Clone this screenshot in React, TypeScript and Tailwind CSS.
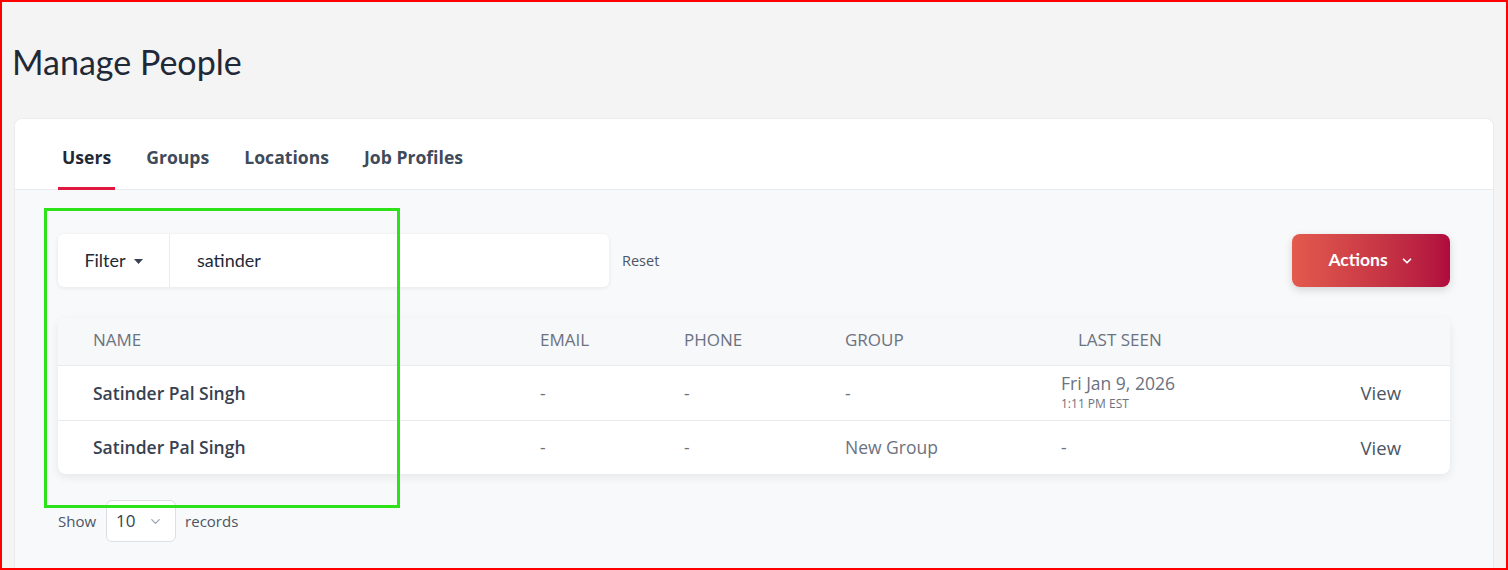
import { ChevronDown } from 'lucide-react';

const TABS = ['Users', 'Groups', 'Locations', 'Job Profiles'];

const USERS = [
  { name: 'Satinder Pal Singh', email: '-', phone: '-', group: '-', seen: 'Fri Jan 9, 2026', seenTime: '1:11 PM EST' },
  { name: 'Satinder Pal Singh', email: '-', phone: '-', group: 'New Group', seen: '-', seenTime: '' },
];

const COLS = 'grid grid-cols-[447px_144px_161px_216px_1fr_140px]';

function Tabs({ active }: { active: string }) {
  return (
    <div className="h-[71px] flex items-stretch gap-[27px] pl-[43px] border-b border-[#e8eaed] bg-white rounded-t-lg font-['Open_Sans',sans-serif]">
      {TABS.map(t => {
        const on = t === active;
        return (
          <div
            key={t}
            className={[
              'pt-[9px] px-1 flex items-center border-b-[3px] -mb-px text-[17.6px] font-bold',
              on ? 'border-[#e0173f] text-[#1f2937]' : 'border-transparent text-[#3f4a5a]',
            ].join(' ')}
          >
            {t}
          </div>
        );
      })}
    </div>
  );
}

function Toolbar() {
  return (
    <div className="flex items-center">
      <div className="w-[551px] h-[53px] flex bg-white rounded-md shadow-[0_1px_4px_rgba(0,0,0,0.08)]">
        <button className="w-[112px] flex items-center justify-center gap-2 border-r border-[#ececec] text-[18px] text-[#1f2937]">
          Filter
          <svg width="9" height="5" viewBox="0 0 9 5" className="mt-px">
            <path d="M0 0h9L4.5 5z" fill="#374151" />
          </svg>
        </button>
        <div className="flex-1 flex items-center pl-[27px] text-[18px] text-[#1f2937]">satinder</div>
      </div>
      <span className="ml-[13px] text-[14.5px] text-[#4b5563] font-['Open_Sans',sans-serif]">Reset</span>
      <button className="ml-auto w-[158px] h-[53px] flex items-center justify-center gap-3 rounded-lg bg-gradient-to-r from-[#e35a4d] to-[#b00a3e] text-white text-[17.5px] font-bold shadow-[0_3px_8px_rgba(0,0,0,0.15)]">
        Actions
        <ChevronDown size={14} strokeWidth={3} />
      </button>
    </div>
  );
}

function UserTable() {
  return (
    <div className="mt-[31px] bg-white rounded-lg shadow-[0_3px_10px_rgba(0,0,0,0.08)] overflow-hidden font-['Open_Sans',sans-serif]">
      <div className={`${COLS} h-12 items-center bg-[#f7f8f9] border-b border-[#e8eaed] text-[17px] text-[#6b7280] uppercase pb-[4px]`}>
        <div className="pl-[35px]">Name</div>
        <div className="pl-[35px]">Email</div>
        <div className="pl-[35px]">Phone</div>
        <div className="pl-[35px]">Group</div>
        <div className="pl-[52px]">Last Seen</div>
        <div />
      </div>
      {USERS.map((u, i) => (
        <div
          key={i}
          className={`${COLS} h-[54px] items-center text-[17.5px] text-[#6b7280] ${i > 0 ? 'border-t border-[#e8eaed]' : ''}`}
        >
          <div className="pl-[35px] font-semibold text-[#374151]">{u.name}</div>
          <div className="pl-[35px]">{u.email}</div>
          <div className="pl-[35px]">{u.phone}</div>
          <div className="pl-[35px]">{u.group}</div>
          {u.seenTime ? (
            <div className="pl-[35px] leading-tight">
              <div className="-mt-[2px]">{u.seen}</div>
              <div className="text-[12px] mt-px">{u.seenTime}</div>
            </div>
          ) : (
            <div className="pl-[35px]">{u.seen}</div>
          )}
          <div className="pr-[49px] text-right text-[18.5px] font-medium text-[#4b5563]">View</div>
        </div>
      ))}
    </div>
  );
}

export default function App() {
  return (
    <div className="relative w-[1508px] h-[570px] overflow-hidden border-2 border-[#ff0000] bg-[#f4f4f4] px-3 font-['Lato',sans-serif]">
      <h1 className="-ml-[2px] pt-[40px] h-[80px] text-[34px] leading-[40px] text-[#1f2937]">Manage People</h1>

      <div className="mt-[36px] bg-white rounded-lg border border-[#ebebeb]">
        <Tabs active="Users" />
        <div className="bg-[#f8f9fb] px-[43px] pt-[44px] pb-10">
          <Toolbar />
          <UserTable />
          <div className="mt-[26px] flex items-center text-[15px] text-[#4b5563] font-['Open_Sans',sans-serif]">
            Show
            <div className="ml-[10px] mr-[9px] w-[70px] h-[42px] flex items-center justify-between pl-[9px] pr-[12px] bg-white border border-[#dcdfe3] rounded-md text-[17px] text-[#374151]">
              10
              <ChevronDown size={15} className="text-[#9ca3af]" />
            </div>
            records
          </div>
        </div>
      </div>

      {/* highlight box drawn over the search and name column */}
      <div className="absolute left-[42px] top-[206px] w-[356px] h-[300px] border-[3px] border-[#2ee21a] pointer-events-none" />
    </div>
  );
}
